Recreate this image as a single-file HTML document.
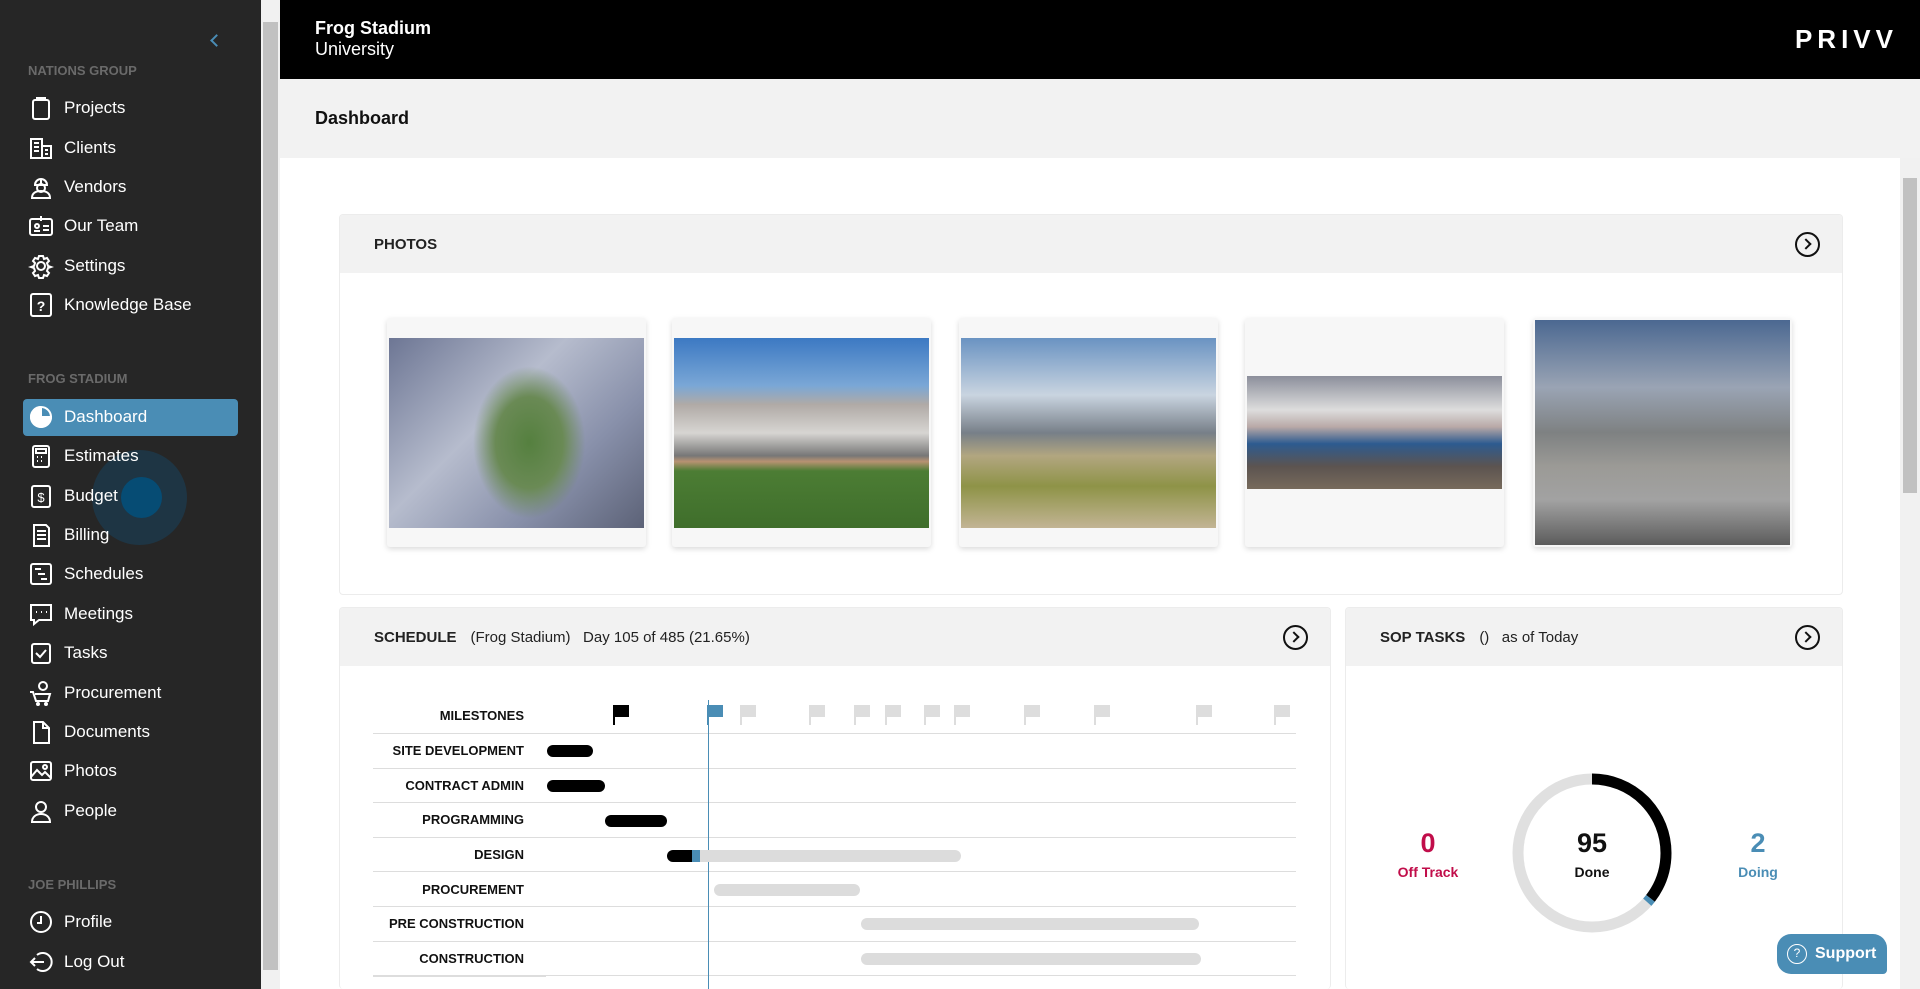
<!DOCTYPE html>
<html style="overflow:hidden;height:989px"><head><meta charset="utf-8"><style>
*{margin:0;padding:0;box-sizing:border-box}
body{width:1920px;height:989px;overflow:hidden;font-family:"Liberation Sans",sans-serif;background:#fff;position:relative}
.abs{position:absolute}
#side{left:0;top:0;width:261px;height:989px;background:#262626;color:#fff}
.sec{position:absolute;left:28px;font-size:13px;font-weight:bold;color:#6a6a6a}
.it{position:absolute;left:28px;height:36px;display:flex;align-items:center;font-size:17px;color:#fff}
.it svg{width:26px;height:26px;margin-right:10px;fill:none;stroke:#fff;stroke-width:2}
.card{position:absolute;background:#fff;border:1px solid #ececec;border-radius:4px;overflow:hidden}
.ch{background:#f2f2f2;height:58px;display:flex;align-items:center;padding-left:34px;font-size:15px;color:#222}
.ch b{font-weight:bold;margin-right:14px}
.arr{position:absolute;top:17px;width:25px;height:25px;border:2px solid #111;border-radius:50%}
.arr:after{content:"";position:absolute;left:5px;top:6px;width:6px;height:6px;border-right:2px solid #111;border-top:2px solid #111;transform:rotate(45deg)}
.tile{position:absolute;top:318px;width:259px;height:229px;background:#f7f7f7;box-shadow:0 2px 6px rgba(0,0,0,.15);border-radius:3px;overflow:hidden}
.tile div{position:absolute;left:2px;right:2px}
.lbl{position:absolute;left:340px;width:184px;text-align:right;font-size:13px;font-weight:bold;color:#111}
.ln{position:absolute;left:373px;width:923px;height:1px;background:#ddd}
.bar{position:absolute;height:12px;border-radius:6px}
.fl{position:absolute;top:705px;width:16px;height:20px}
.fl i{position:absolute;left:0;top:0;width:2px;height:20px}
.fl b{position:absolute;left:0;top:0;width:16px;height:12px}
</style></head><body>
<div id="side" class="abs">
<div class="abs" style="left:212px;top:36px;width:9px;height:9px;border-left:2px solid #4a8db5;border-bottom:2px solid #4a8db5;transform:rotate(45deg)"></div>
<div class="sec" style="top:63px">NATIONS GROUP</div>
<div class="it" style="top:90px"><svg viewBox="0 0 26 26"><rect x="5" y="5" width="16" height="19" rx="2"/><path d="M9 5V3h8v2"/></svg>Projects</div>
<div class="it" style="top:130px"><svg viewBox="0 0 26 26"><rect x="3" y="4" width="11" height="19"/><rect x="14" y="11" width="9" height="12"/><path d="M6 8h5M6 12h5M6 16h5M17 15h3M17 19h3"/></svg>Clients</div>
<div class="it" style="top:169px"><svg viewBox="0 0 26 26"><path d="M7 11a6 6 0 0 1 12 0zM13 5v6"/><circle cx="13" cy="14" r="4"/><path d="M4 24c0-5 4-7 9-7s9 2 9 7z"/></svg>Vendors</div>
<div class="it" style="top:208px"><svg viewBox="0 0 26 26"><rect x="2" y="6" width="22" height="16" rx="2"/><path d="M13 3v5M6 18h6M15 13h6M15 17h6"/><circle cx="9" cy="13" r="2"/></svg>Our Team</div>
<div class="it" style="top:248px"><svg viewBox="0 0 26 26"><circle cx="13" cy="13" r="4"/><path d="M11 3h4l1 3 3-1 2 3-2 2 1 3 3 1v0l-3 1-1 3 2 2-2 3-3-1-1 3h-4l-1-3-3 1-2-3 2-2-1-3-3-1 3-1 1-3-2-2 2-3 3 1z"/></svg>Settings</div>
<div class="it" style="top:287px"><svg viewBox="0 0 26 26"><rect x="3" y="2" width="20" height="22" rx="2"/><text x="13" y="19" font-size="14" fill="#fff" stroke="none" text-anchor="middle" font-family="Liberation Sans" font-weight="bold">?</text></svg>Knowledge Base</div>
<div class="sec" style="top:371px">FROG STADIUM</div>
<div class="abs" style="left:23px;top:399px;width:215px;height:37px;background:#4a8db5;border-radius:4px"></div>
<div class="it" style="top:399px"><svg viewBox="0 0 26 26"><circle cx="13" cy="13" r="10"/><path d="M13 3v10h10A10 10 0 0 1 13 23 10 10 0 0 1 13 3" fill="#fff"/></svg>Dashboard</div>
<div class="abs" style="left:92px;top:450px;width:95px;height:95px;border-radius:50%;background:#1d3a4c;opacity:.8"></div>
<div class="abs" style="left:121px;top:477px;width:41px;height:41px;border-radius:50%;background:#064c74"></div>
<div class="it" style="top:438px"><svg viewBox="0 0 26 26"><rect x="5" y="3" width="16" height="21" rx="2"/><rect x="8" y="6" width="10" height="4"/><path d="M9 14h1M13 14h1M17 14h0M9 18h1M13 18h1M17 18h0"/></svg>Estimates</div>
<div class="it" style="top:478px"><svg viewBox="0 0 26 26"><rect x="4" y="3" width="18" height="21" rx="2"/><text x="13" y="19" font-size="13" fill="#fff" stroke="none" text-anchor="middle" font-family="Liberation Sans">$</text></svg>Budget</div>
<div class="it" style="top:517px"><svg viewBox="0 0 26 26"><path d="M6 3h12l3 3v18H6zM9 9h9M9 13h9M9 17h9"/></svg>Billing</div>
<div class="it" style="top:556px"><svg viewBox="0 0 26 26"><rect x="3" y="3" width="20" height="20" rx="2"/><path d="M7 8h6M10 13h7M13 18h6"/></svg>Schedules</div>
<div class="it" style="top:596px"><svg viewBox="0 0 26 26"><path d="M3 4h20v15H11l-5 4v-4H3z"/><path d="M8 11h1M13 11h1M18 11h1"/></svg>Meetings</div>
<div class="it" style="top:635px"><svg viewBox="0 0 26 26"><rect x="4" y="4" width="18" height="19" rx="2"/><path d="M8 13l4 4 6-7"/></svg>Tasks</div>
<div class="it" style="top:675px"><svg viewBox="0 0 26 26"><path d="M2 12h3l3 9h12l2-7H7"/><circle cx="10" cy="24" r="1"/><circle cx="18" cy="24" r="1"/><circle cx="15" cy="6" r="4"/></svg>Procurement</div>
<div class="it" style="top:714px"><svg viewBox="0 0 26 26"><path d="M6 3h9l6 6v15H6zM15 3v6h6"/></svg>Documents</div>
<div class="it" style="top:753px"><svg viewBox="0 0 26 26"><rect x="3" y="4" width="20" height="18" rx="2"/><path d="M3 19l6-7 5 5 3-3 6 6"/><circle cx="17" cy="9" r="2"/></svg>Photos</div>
<div class="it" style="top:793px"><svg viewBox="0 0 26 26"><circle cx="13" cy="9" r="5"/><path d="M4 24c0-5 4-8 9-8s9 3 9 8z"/></svg>People</div>
<div class="sec" style="top:877px">JOE PHILLIPS</div>
<div class="it" style="top:904px"><svg viewBox="0 0 26 26"><circle cx="13" cy="13" r="10"/><path d="M13 7v7h-4"/></svg>Profile</div>
<div class="it" style="top:944px"><svg viewBox="0 0 26 26"><path d="M9 6a9 9 0 1 1 0 14M3 13h13M7 9l-4 4 4 4"/></svg>Log Out</div>
</div>
<div class="abs" style="left:261px;top:0;width:19px;height:989px;background:#f1f1f1"></div>
<div class="abs" style="left:263px;top:22px;width:15px;height:948px;background:#c1c1c1"></div>
<div class="abs" style="left:280px;top:0;width:1640px;height:79px;background:#000;color:#fff">
<div class="abs" style="left:35px;top:18px;font-size:18px;font-weight:bold">Frog Stadium</div>
<div class="abs" style="left:35px;top:39px;font-size:18px">University</div>
<div class="abs" style="right:22px;top:24px;font-size:26px;font-weight:bold;letter-spacing:5px">PRIVV</div>
</div>
<div class="abs" style="left:280px;top:79px;width:1640px;height:79px;background:#f2f2f2"><div class="abs" style="left:35px;top:29px;font-size:18px;font-weight:bold;color:#111">Dashboard</div></div>
<div class="abs" style="left:1900px;top:158px;width:20px;height:831px;background:#f1f1f1"></div>
<div class="abs" style="left:1903px;top:178px;width:14px;height:315px;background:#c1c1c1"></div>

<div class="card" style="left:339px;top:214px;width:1504px;height:381px"><div class="ch"><b>PHOTOS</b></div><div class="arr" style="right:22px"></div></div>
<div class="tile" style="left:387px"><div style="top:20px;height:190px;background:radial-gradient(ellipse 22% 40% at 55% 55%,#55803f,#6a8a55 60%,transparent 100%),linear-gradient(135deg,#6d7694,#b6bccd 40%,#8890aa 70%,#5c6277)"></div></div>
<div class="tile" style="left:672px"><div style="top:20px;height:190px;background:linear-gradient(#3c79c3 0%,#7aa7d6 25%,#b0aaa6 35%,#d7d5d2 50%,#777 62%,#b89272 65%,#4c7d34 70%,#3f6e2b 100%)"></div></div>
<div class="tile" style="left:959px"><div style="top:20px;height:190px;background:linear-gradient(#6a93c2 0%,#c9d4e0 30%,#777f88 50%,#b2a680 62%,#8e9347 78%,#c2b494 100%)"></div></div>
<div class="tile" style="left:1245px"><div style="top:58px;height:113px;background:linear-gradient(#8c8f9b,#ddd 30%,#b9a9a7 45%,#2d5b90 60%,#5c5450 80%,#776a5c)"></div></div>
<div class="tile" style="left:1533px"><div style="top:2px;height:225px;background:linear-gradient(#4b6891 0%,#9aa4b4 30%,#7e8182 50%,#9b9a96 65%,#a2a2a2 80%,#5c5c5c 100%)"></div></div>

<div class="card" style="left:339px;top:607px;width:992px;height:382px;border-bottom:none"><div class="ch"><b>SCHEDULE</b>(Frog Stadium)&nbsp;&nbsp;&nbsp;Day 105 of 485 (21.65%)</div><div class="arr" style="right:22px"></div></div>
<div class="card" style="left:1345px;top:607px;width:498px;height:382px;border-bottom:none"><div class="ch"><b>SOP TASKS</b>()&nbsp;&nbsp;&nbsp;as of Today</div><div class="arr" style="right:22px"></div></div>

<div class="lbl" style="top:708px">MILESTONES</div>
<div class="lbl" style="top:743px">SITE DEVELOPMENT</div>
<div class="lbl" style="top:778px">CONTRACT ADMIN</div>
<div class="lbl" style="top:812px">PROGRAMMING</div>
<div class="lbl" style="top:847px">DESIGN</div>
<div class="lbl" style="top:882px">PROCUREMENT</div>
<div class="lbl" style="top:916px">PRE CONSTRUCTION</div>
<div class="lbl" style="top:951px">CONSTRUCTION</div>
<div class="ln" style="top:733px"></div><div class="ln" style="top:768px"></div><div class="ln" style="top:802px"></div><div class="ln" style="top:837px"></div><div class="ln" style="top:871px"></div><div class="ln" style="top:906px"></div><div class="ln" style="top:941px"></div><div class="ln" style="top:975px"></div><div class="abs" style="left:373px;top:976px;width:173px;height:1px;background:#ddd"></div>
<div class="abs" style="left:708px;top:700px;width:1px;height:289px;background:#4a8db5"></div>
<div class="bar" style="left:547px;top:745px;width:46px;background:#000"></div>
<div class="bar" style="left:547px;top:780px;width:58px;background:#000"></div>
<div class="bar" style="left:605px;top:815px;width:62px;background:#000"></div>
<div class="bar" style="left:667px;top:850px;width:294px;background:#dcdcdc"></div>
<div class="bar" style="left:667px;top:850px;width:30px;background:#000;border-radius:6px 0 0 6px"></div>
<div class="abs" style="left:692px;top:850px;width:8px;height:12px;background:#4a8db5"></div>
<div class="bar" style="left:714px;top:884px;width:146px;background:#dcdcdc"></div>
<div class="bar" style="left:861px;top:918px;width:338px;background:#dcdcdc"></div>
<div class="bar" style="left:861px;top:953px;width:340px;background:#dcdcdc"></div>
<div class="fl" style="left:613px"><i style="background:#000"></i><b style="background:#000"></b></div>
<div class="fl" style="left:707px"><i style="background:#4a8db5"></i><b style="background:#4a8db5"></b></div>
<div class="fl" style="left:740px"><i style="background:#ddd"></i><b style="background:#ddd"></b></div>
<div class="fl" style="left:809px"><i style="background:#ddd"></i><b style="background:#ddd"></b></div>
<div class="fl" style="left:854px"><i style="background:#ddd"></i><b style="background:#ddd"></b></div>
<div class="fl" style="left:885px"><i style="background:#ddd"></i><b style="background:#ddd"></b></div>
<div class="fl" style="left:924px"><i style="background:#ddd"></i><b style="background:#ddd"></b></div>
<div class="fl" style="left:954px"><i style="background:#ddd"></i><b style="background:#ddd"></b></div>
<div class="fl" style="left:1024px"><i style="background:#ddd"></i><b style="background:#ddd"></b></div>
<div class="fl" style="left:1094px"><i style="background:#ddd"></i><b style="background:#ddd"></b></div>
<div class="fl" style="left:1196px"><i style="background:#ddd"></i><b style="background:#ddd"></b></div>
<div class="fl" style="left:1274px"><i style="background:#ddd"></i><b style="background:#ddd"></b></div>

<svg class="abs" style="left:1512px;top:773px" width="160" height="160" viewBox="0 0 160 160">
<circle cx="80" cy="80" r="74" fill="none" stroke="#e0e0e0" stroke-width="11"/>
<circle cx="80" cy="80" r="74" fill="none" stroke="#000" stroke-width="11" stroke-dasharray="165 500" transform="rotate(-90 80 80)"/>
<circle cx="80" cy="80" r="74" fill="none" stroke="#4a8db5" stroke-width="11" stroke-dasharray="0 165 5 500" transform="rotate(-90 80 80)"/>
</svg>
<div class="abs" style="left:1512px;top:828px;width:160px;text-align:center;font-size:27px;font-weight:bold;color:#111">95</div>
<div class="abs" style="left:1512px;top:864px;width:160px;text-align:center;font-size:14px;font-weight:bold;color:#111">Done</div>
<div class="abs" style="left:1378px;top:828px;width:100px;text-align:center;font-size:27px;font-weight:bold;color:#c10d4a">0</div>
<div class="abs" style="left:1378px;top:864px;width:100px;text-align:center;font-size:14px;font-weight:bold;color:#c10d4a">Off Track</div>
<div class="abs" style="left:1708px;top:828px;width:100px;text-align:center;font-size:27px;font-weight:bold;color:#4a8db5">2</div>
<div class="abs" style="left:1708px;top:864px;width:100px;text-align:center;font-size:14px;font-weight:bold;color:#4a8db5">Doing</div>
<div class="abs" style="left:1777px;top:934px;width:110px;height:40px;background:#4a8db5;border-radius:14px 14px 4px 14px;color:#fff;font-size:16px;font-weight:bold;display:flex;align-items:center;padding-left:10px"><span style="display:inline-block;width:20px;height:20px;border:1.5px solid #fff;border-radius:50%;font-size:12px;text-align:center;line-height:17px;margin-right:8px;font-weight:normal">?</span>Support</div>
</body></html>
